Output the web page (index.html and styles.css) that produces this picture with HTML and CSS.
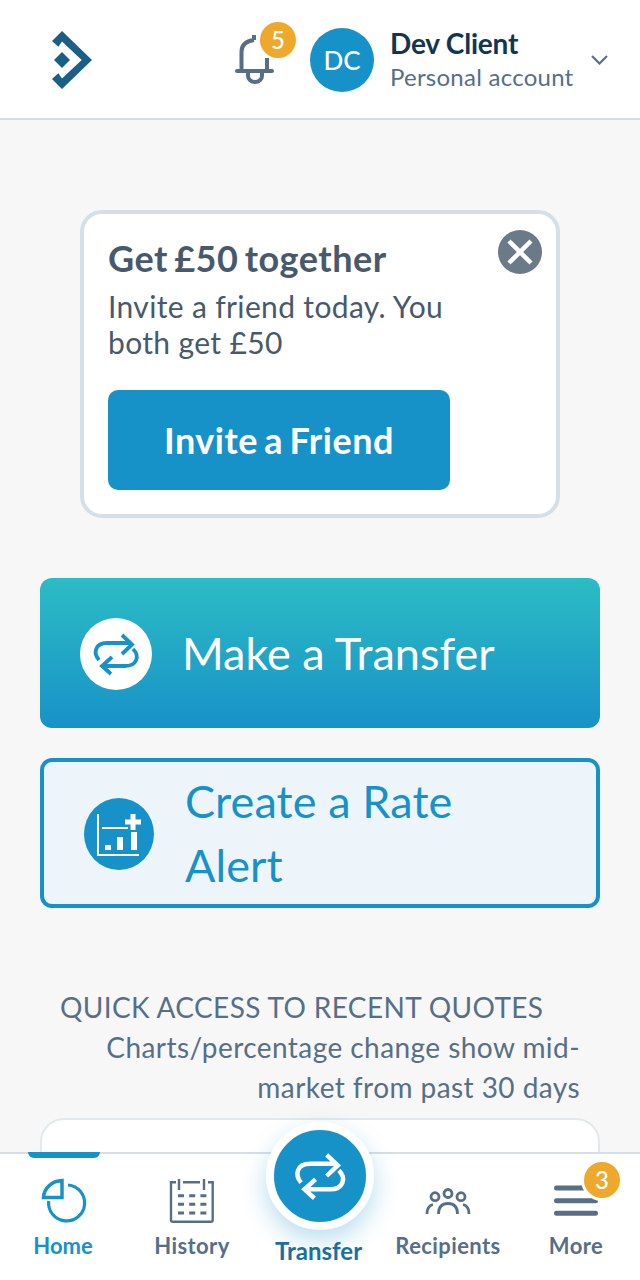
FILE: index.html
```html
<!DOCTYPE html>
<html lang="en">
<head>
<meta charset="utf-8">
<title>Dashboard</title>
<link rel="stylesheet" href="styles.css">
</head>
<body>
<div class="app">
  <header class="top">
    <svg class="logo" viewBox="0 0 40 58"><path fill="#1b5f86" d="M10 0 L40 29 L10 58 L0 48 L6.300 42.300 L10 47.500 L29.700 29 L10 10.500 L6.300 15.700 L0 10 Z"/><path fill="#1b5f86" d="M10 21 L18 29 L10 37 L2 29 Z"/></svg>
    <div class="bell">
      <svg class="bell-icon" viewBox="0 0 40 50"><path fill="none" stroke="#566f87" stroke-width="4" stroke-linecap="round" d="M3 37 H38"/><path fill="none" stroke="#566f87" stroke-width="4" d="M7.500 37 V18 C7.500 11 12 7 20 6 M33 37 V24 M20 6 V1 M14 37 V42 A7 6 0 0 0 28 42 V37"/></svg>
      <span class="badge badge-bell">5</span>
    </div>
    <div class="avatar">DC</div>
    <div class="who">
      <div class="who-name">Dev Client</div>
      <div class="who-sub">Personal account</div>
    </div>
    <svg class="chev" viewBox="0 0 17 10"><path fill="none" stroke="#566f87" stroke-width="2.200" d="M1 1 L8.500 8.500 L16 1"/></svg>
  </header>

  <main class="content">
    <section class="promo">
      <h2 class="promo-title">Get £50 together</h2>
      <p class="promo-text">Invite a friend today. You both get £50</p>
      <button class="promo-btn">Invite a Friend</button>
      <span class="close">
        <svg viewBox="0 0 44 44"><path stroke="#fff" stroke-width="4.500" d="M11 11 L33 33 M33 11 L11 33"/></svg>
      </span>
    </section>

    <a class="action action-primary">
      <span class="action-icon white">
        <svg viewBox="0 0 72 72"><path fill="none" stroke="#1792c8" stroke-width="3.800" d="M19 42 C13 35 15 25 27 25 H51 M42 17 L52 26.500 L42 36 M53 31 C60 38 57 48 45 48 H23 M32 39 L22 48 L31 56"/></svg>
      </span>
      <span class="action-label">Make a Transfer</span>
    </a>

    <a class="action action-outline">
      <span class="action-icon blue">
        <svg viewBox="0 0 70 72"><path fill="none" stroke="#fff" stroke-width="2" d="M14 16 V57 H55 M18 30 H44"/><path fill="#fff" d="M21 47 H27 V52 H21 Z M33 39 H39 V52 H33 Z M47 34 H53 V52 H47 Z M46.500 16 H51.500 V21.500 H57 V26.500 H51.500 V32 H46.500 V26.500 H41 V21.500 H46.500 Z"/></svg>
      </span>
      <span class="action-label">Create a Rate Alert</span>
    </a>

    <section class="quotes">
      <h3 class="quotes-title">QUICK ACCESS TO RECENT QUOTES</h3>
      <p class="quotes-note">Charts/percentage change show mid-market from past 30 days</p>
      <div class="quote-card"></div>
    </section>
  </main>

  <nav class="tabs">
    <a class="tab active">
      <span class="tab-marker"></span>
      <svg class="tab-icon" viewBox="0 0 46 46"><path fill="none" stroke="#1792c8" stroke-width="3.200" d="M27 7 A18 18 0 1 1 7.700 23"/><path fill="none" stroke="#1792c8" stroke-width="3.500" d="M21 2.500 V19.500 H2.500 C3 10 11 3 21 2.500 Z"/></svg>
      <span class="tab-label">Home</span>
    </a>
    <a class="tab">
      <svg class="tab-icon" viewBox="0 0 46 46"><path fill="none" stroke="#566f87" stroke-width="2.400" d="M7 4.300 H2 V42 Q2 43.700 4 43.700 H42 Q43.700 43.700 43.700 42 V4.300 H39 M10 1 V12 M35 1 V12 M14 4.300 H31"/><path stroke="#566f87" stroke-width="3" stroke-dasharray="6 5.200" d="M9 17.700 H38 M9 26.300 H38 M9 35 H38"/></svg>
      <span class="tab-label">History</span>
    </a>
    <a class="tab tab-center">
      <span class="fab">
        <svg viewBox="0 0 72 72"><path fill="none" stroke="#fff" stroke-width="4" d="M19 42 C13 35 15 25 27 25 H51 M42 17 L52 26.500 L42 36 M53 31 C60 38 57 48 45 48 H23 M32 39 L22 48 L31 56"/></svg>
      </span>
      <span class="tab-label">Transfer</span>
    </a>
    <a class="tab">
      <svg class="tab-icon people" viewBox="0 0 46 28"><g fill="none" stroke="#566f87" stroke-width="2.800"><circle cx="23" cy="6.500" r="4"/><circle cx="10" cy="9.700" r="4"/><circle cx="36" cy="9.700" r="4"/><path d="M13.500 27 C13.500 20 17 16.500 23 16.500 C29 16.500 32.500 20 32.500 27 M2 27 C2 22 4 18.500 8 17.500 M44 27 C44 22 42 18.500 38 17.500"/></g></svg>
      <span class="tab-label">Recipients</span>
    </a>
    <a class="tab">
      <svg class="tab-icon" viewBox="0 0 46 46"><path stroke="#566f87" stroke-width="5" stroke-linecap="round" d="M3.500 10 H42.500 M3.500 22.700 H42.500 M3.500 35.300 H42.500"/></svg>
      <span class="tab-label">More</span>
      <span class="badge badge-more">3</span>
    </a>
  </nav>
</div>
</body>
</html>
```
FILE: styles.css
```css
* { box-sizing: border-box; }
html, body { margin: 0; padding: 0; }
body { font-family: Lato, "Liberation Sans", sans-serif; background: #f7f7f7; color: #4a5d70; }
.app { width: 640px; height: 1280px; overflow: hidden; position: relative; }

.top { height: 120px; background: #fff; border-bottom: 2px solid #d5dfe8; display: flex; align-items: center; padding: 0 32px 0 52px; }
.logo { width: 40px; height: 58px; display: block; margin-top: 2px; }
.bell { position: relative; width: 40px; height: 50px; margin-left: 142px; }
.bell-icon { width: 40px; height: 50px; display: block; }
.badge { position: absolute; width: 36px; height: 36px; border-radius: 50%; background: #eea92c; color: #fff; font-size: 24px; line-height: 36px; text-align: center; font-weight: 500; }
.badge-bell { left: 26px; top: -12px; }
.avatar { width: 64px; height: 64px; border-radius: 50%; background: #1792c8; color: #fff; font-size: 26px; font-weight: 500; display: flex; align-items: center; justify-content: center; margin: 2px 0 0 36px; }
.who { margin: 2px 0 0 16px; flex: 1; }
.who-name { font-size: 28px; font-weight: 700; line-height: 34px; color: #14354e; letter-spacing: -0.2px; }
.who-sub { font-size: 24px; line-height: 34px; color: #566f87; letter-spacing: 0.25px; }
.chev { width: 17px; height: 10px; display: block; margin-top: 2px; }

.content { padding: 90px 40px 0; }
.promo { position: relative; width: 480px; height: 308px; margin: 0 auto; padding: 22px 24px 0; background: #fff; border: 4px solid #d5dfe8; border-radius: 22px; }
.promo-title { margin: 0; font-size: 36px; line-height: 44px; font-weight: 700; color: #47596b; letter-spacing: 0.52px; word-spacing: -3px; }
.promo-text { margin: 8px 0 0; width: 360px; font-size: 30px; line-height: 36px; color: #47596b; letter-spacing: 0.35px; }
.promo-btn { display: block; width: 342px; height: 100px; margin-top: 30px; border: 0; border-radius: 10px; background: #1792c8; color: #fff; font-family: inherit; font-size: 36px; font-weight: 700; letter-spacing: 0.53px; word-spacing: -3px; }
.close { position: absolute; right: 14px; top: 16px; width: 44px; height: 44px; border-radius: 50%; background: #6a7a88; }
.close svg { display: block; width: 44px; height: 44px; }

.action { display: flex; align-items: center; width: 560px; height: 150px; border-radius: 12px; }
.action-primary { margin-top: 60px; background: linear-gradient(#2cbcc4, #1792c8); color: #fff; padding-left: 40px; }
.action-outline { margin-top: 30px; background: #edf5fb; border: 4px solid #1792c8; color: #1792c8; padding-left: 40px; }
.action-icon { flex: none; border-radius: 50%; display: flex; align-items: center; justify-content: center; margin-top: 2px; }
.action-icon.white { width: 72px; height: 72px; background: #fff; }
.action-icon.white svg { width: 72px; height: 72px; }
.action-icon.blue { width: 70px; height: 72px; background: #1792c8; }
.action-icon.blue svg { width: 70px; height: 72px; }
.action-label { font-size: 45px; line-height: 64px; }
.action-primary .action-label { margin-left: 30px; }
.action-outline .action-label { margin-left: 31px; width: 330px; letter-spacing: 0.1px; }

.quotes { margin-top: 76px; }
.quotes-title { margin: 0 0 0 20px; font-size: 28px; line-height: 46px; font-weight: 400; color: #566f87; letter-spacing: 0.37px; white-space: nowrap; }
.quotes-note { margin: -3px 20px 0 auto; width: 500px; font-size: 28px; line-height: 40px; color: #566f87; text-align: right; letter-spacing: 0.44px; }
.quote-card { height: 120px; margin-top: 11px; background: #fff; border: 2px solid #e3e8ee; border-radius: 24px; }

.tabs { position: absolute; left: 0; right: 0; bottom: 0; height: 128px; background: #fff; border-top: 2px solid #d5dfe8; display: grid; grid-template-columns: 128px 128px 128px 128px 128px; }
.tab { position: relative; display: flex; flex-direction: column; align-items: center; padding-top: 24px; color: #566f87; }
.tab-icon { width: 46px; height: 46px; display: block; }
.tab-icon.people { height: 28px; margin: 9px 0 9px; }
.tab-label { font-size: 22px; line-height: 30px; font-weight: 700; margin-top: 7px; letter-spacing: 0.4px; }
.tab.active { color: #1792c8; }
.tab.active .tab-label { letter-spacing: 0; margin-right: 2px; }
.tab-marker { position: absolute; top: -2px; left: 28px; width: 72px; height: 6px; background: #1792c8; border-radius: 0 0 6px 6px; }
.tab-center { color: #1b6f9f; }
.tab-center .tab-label { position: absolute; top: 79px; left: 19px; margin-top: 3px; font-size: 24px; line-height: 30px; letter-spacing: 0; }
.fab { position: absolute; top: -32px; left: 10px; width: 108px; height: 108px; border: 8px solid #fff; border-radius: 50%; background: #1792c8; display: flex; align-items: center; justify-content: center; box-shadow: 0 10px 24px rgba(23, 146, 200, 0.3); }
.fab svg { width: 80px; height: 80px; flex: none; }
.badge-more { left: 72px; top: 8px; box-shadow: 0 0 0 3px #fff; }
```
